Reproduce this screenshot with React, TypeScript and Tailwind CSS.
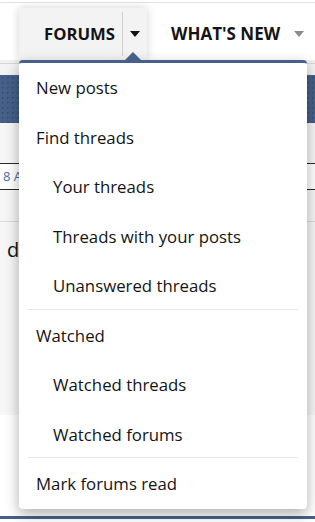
import { useState } from "react";

type Item = { label: string; sub?: boolean; sep?: boolean };

const items: Item[] = [
  { label: "New posts" },
  { label: "Find threads" },
  { label: "Your threads", sub: true },
  { label: "Threads with your posts", sub: true },
  { label: "Unanswered threads", sub: true, sep: true },
  { label: "Watched" },
  { label: "Watched threads", sub: true },
  { label: "Watched forums", sub: true, sep: true },
  { label: "Mark forums read" },
];

function Caret({ className }: { className: string }) {
  return (
    <svg width="10" height="6" viewBox="0 0 10 6" className={className}>
      <path d="M0 0h10L5 6z" fill="currentColor" />
    </svg>
  );
}

export default function App() {
  const [open] = useState(true);

  return (
    <div className="relative w-[315px] h-[522px] overflow-hidden bg-white text-[#141414] font-['Open_Sans','Noto_Sans',sans-serif]">
      {/* Page behind the menu */}
      <div className="h-[2px]" />
      <div className="h-px bg-[#e2e2e2]" />
      <nav className="flex h-[57px] items-stretch pt-[5px]">
        <div className="ml-[19px] flex w-[128px] items-center bg-[#f3f3f3] shadow-[0_0_8px_rgba(0,0,0,0.18)]">
          <span className="pl-[25px] text-[16.7px] font-bold">FORUMS</span>
          <span className="ml-auto flex h-[44px] w-[25px] items-center justify-center border-l border-[#cfcfcf]">
            <Caret className="text-[#141414]" />
          </span>
        </div>
        <div className="ml-[24px] flex items-center">
          <span className="text-[17px] font-bold">WHAT'S NEW</span>
          <Caret className="ml-[14px] text-[#8c8c8c]" />
        </div>
      </nav>
      <div className="h-[3px] bg-[#f0f0f0]" />
      <div className="h-px bg-[#d6d6d6]" />
      <div className="h-[11px] bg-[#f3f3f3]" />
      <div className="h-[48px] bg-[#47608a] bg-[radial-gradient(#3a5076_1px,transparent_1px)] bg-[length:5px_5px]" />
      <div className="h-[292px] bg-[#f6f6f6]">
        <div className="h-[40px]" />
        <div className="flex h-[27px] items-center border-y border-[#2a2a2a] bg-white pl-[3px] text-[13px] text-[#4a6fa8]">
          8 Aug
        </div>
        <div className="h-[31px]" />
        <div className="h-px bg-[#dcdcdc]" />
        <div className="pl-[7px] pt-[16px] text-[20px] leading-[24px]">d</div>
      </div>
      <div className="h-[101px] bg-white" />
      <div className="h-[3px] bg-[#47608a]" />

      {/* Dropdown menu */}
      {open && (
        <div className="absolute left-[19px] top-[60px] w-[288px]">
          <div className="absolute -top-[8px] left-[106px] h-0 w-0 border-x-[8px] border-b-[8px] border-x-transparent border-b-[#47608a]" />
          <div className="rounded-[4px] border-t-[3px] border-[#47608a] bg-white shadow-[0_5px_14px_rgba(0,0,0,0.32)]">
            {items.map((it) => (
              <div key={it.label}>
                <div
                  className={`flex h-[49.5px] items-center text-[16.8px] ${it.sub ? "pl-[34px]" : "pl-[17px]"}`}
                >
                  {it.label}
                </div>
                {it.sep && <div className="mx-[9px] -mt-[2px] mb-px h-px bg-[#e8e8e8]" />}
              </div>
            ))}
          </div>
        </div>
      )}
    </div>
  );
}
